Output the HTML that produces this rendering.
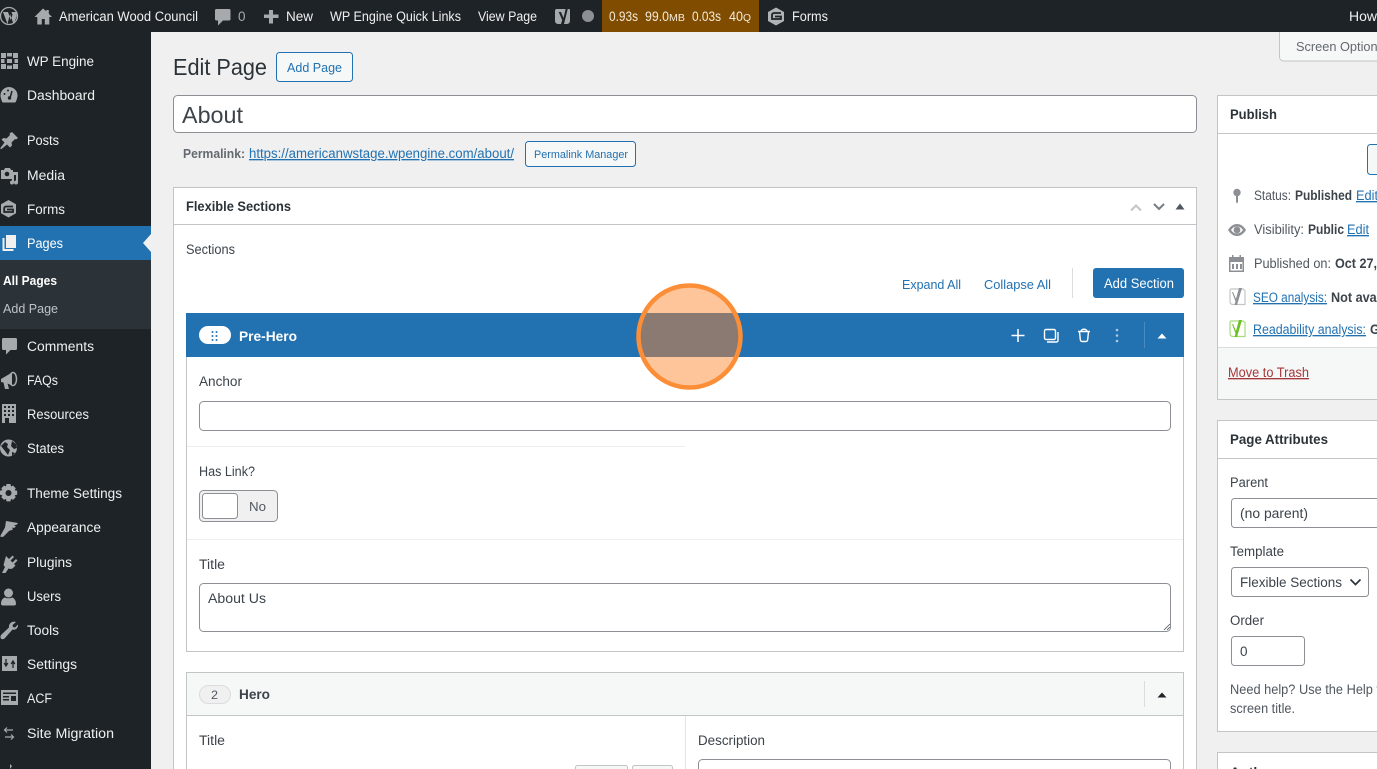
<!DOCTYPE html>
<html lang="en"><head><meta charset="utf-8"><title>Edit Page</title>
<style>
html,body{margin:0;padding:0;width:1377px;height:769px;overflow:hidden;background:#f0f0f1}
svg{display:block}
text{font-family:"Liberation Sans",Arial,sans-serif;font-size:13.5px;fill:#2c3338}
.b{fill:#f0f0f1}
.i{fill:#a7aaad}
.l{fill:#2271b1;text-decoration:underline}
.s{font-weight:bold;fill:#2c3338}
.g{fill:#50575e}
.y{fill:#f4ead8}
.sb{fill:#eef0f1}
</style></head><body>
<svg width="1377" height="769" viewBox="0 0 1377 769" xmlns="http://www.w3.org/2000/svg">
<rect width="1377" height="769" fill="#f0f0f1"/>
<!-- sidebar -->
<rect x="0" y="0" width="151" height="769" fill="#1d2327"/>
<rect x="0" y="226" width="151" height="34" fill="#2271b1"/>
<rect x="0" y="260" width="151" height="69" fill="#2c3338"/>
<path d="M151 234l-8 9 8 9z" fill="#f0f0f1"/>
<!-- screen options -->
<path d="M1279.500 30v27a4 4 0 0 0 4 4H1380V30z" fill="#f6f7f7" stroke="#c3c4c7"/>
<!-- admin bar -->
<rect width="1377" height="32" fill="#1d2327"/>
<rect x="602" width="157" height="32" fill="#7f4c00"/>
<!-- admin bar icons -->
<g fill="#a7aaad">
<circle cx="9" cy="16" r="8.500" fill="none" stroke="#a7aaad" stroke-width="1.300"/>
<path d="M3 12h5l2.700 8 1.800-5.200-1-2.800h4.500c1 1.500 1 3.500.3 5.500L13.500 24 10 14l-2.500 10z"/>
<path d="M43 8.500l-8.500 8.500h2.800v7.500h4.500v-5.500h3v5.500h4.500V17h2.700l-3.200-3.200V10h-2.500v1.300z"/>
<path d="M216.500 9h12.500a1.500 1.500 0 0 1 1.500 1.500v8.500a1.500 1.500 0 0 1-1.500 1.500h-6l-5 5v-5h-1.500a1.500 1.500 0 0 1-1.500-1.500v-8.500a1.500 1.500 0 0 1 1.500-1.500z"/>
<path d="M269 10h4v4.500h5.500v3.500H273v5.500h-4V18h-5v-3.500h5z"/>
<path d="M556 9h13a1 1 0 0 1 1 1v11a3 3 0 0 1-3 3h-9a3 3 0 0 1-3-3V11a2 2 0 0 1 1-2z"/>
<circle cx="588" cy="16" r="6" fill="#8c8f94"/>
<path d="M776 7.500l8 4.500v9l-8 4.500-8-4.500v-9z" fill="#b0b3b6"/>
<path d="M781 13h-7a2 2 0 0 0-2 2v4h9v-2.500h-6" fill="none" stroke="#1d2327" stroke-width="1.800"/>
</g>
<path d="M561 12l2.500 6 2.800-12h2.200l-4.500 18h-3l1.200-4-3.500-8z" fill="#1d2327"/>
<!-- sidebar icons -->
<g fill="#a7aaad">
<path d="M1 53h5v5H1zM7 53h5v3.500H7zM13 53h5v5h-5zM1 59h3.500v4H1zM14.500 59H18v4h-3.500zM1 64h5v5H1zM7 65.500h5V69H7zM13 64h5v5h-5z"/>
<rect x="7" y="59" width="5" height="4"/>
<path d="M9 87a8.500 8.500 0 0 0-8 11.500c.3.800 1 4 2 4h12c1 0 1.700-3.200 2-4A8.500 8.500 0 0 0 9 87z"/>
<path d="M12 91l-2 7" stroke="#1d2327" stroke-width="1.500"/><circle cx="9.500" cy="98" r="1.700" fill="#1d2327"/>
<circle cx="4.500" cy="94" r="1" fill="#1d2327"/><circle cx="8" cy="90.500" r="1" fill="#1d2327"/>
<!-- posts pin -->
<path d="M12 132l6 6-2 1.500-1-.5-3.500 3.500.5 3-2 2-3-3-5.500 4.500-1.500-.5 4.500-6-3-3 2-1.500 3 .5L10 135l-.5-1.500z"/>
<!-- media -->
<path d="M1 170h3l1-2h5l1 2h2v9H1z"/><circle cx="7" cy="174" r="2.300" fill="#1d2327"/>
<path d="M12 172h6v10.500a2 2 0 1 1-2-2v-5.500h-2v7.500a2 2 0 1 1-2-2z"/>
<!-- forms -->
<path d="M8.500 200l7.500 4.200v9.100l-7.500 4.200-7.500-4.200v-9.100z"/>
<path d="M13 206.500H6a1.800 1.800 0 0 0-1.800 1.800V212H13v-2.500H7" fill="none" stroke="#1d2327" stroke-width="1.800"/>
<!-- comments -->
<path d="M3.500 338h12a1.500 1.500 0 0 1 1.500 1.500v9a1.500 1.500 0 0 1-1.500 1.500H10.500l-4.500 4.500V350H3.500A1.500 1.500 0 0 1 2 348.500v-9A1.500 1.500 0 0 1 3.500 338z"/>
<!-- faqs -->
<path d="M1 379l11-6.500v13L7.500 383.500l1.500 5.500H5l-1.500-6.500-2.500-.5z"/><ellipse cx="13" cy="379" rx="3.500" ry="6.500" fill="none" stroke="#a7aaad" stroke-width="1.500"/>
<!-- resources -->
<path d="M2 404h14v19H2z"/>
<path d="M4 406h2v2H4zM8 406h2v2H8zM12 406h2v2h-2zM4 410h2v2H4zM8 410h2v2H8zM12 410h2v2h-2zM4 414h2v2H4zM8 414h2v2H8zM12 414h2v2h-2zM5 418h4v5H5z" fill="#1d2327"/>
<!-- states -->
<circle cx="8.500" cy="448" r="8.500"/>
<path d="M1 446l4-4 3 2-1 3 3 3-2 5-3-4zM12 441l4 3 1 4-3 1-3-3zM12 452l3 1-3 3z" fill="#1d2327"/>
<!-- theme settings -->
<path d="M6.500 484h4l.5 2.500 2-1 2.700 2.700-1 2 2.500.5v4l-2.500.5 1 2-2.700 2.700-2-1-.5 2.500h-4l-.5-2.500-2 1-2.700-2.700 1-2-2.500-.5v-4l2.500-.5-1-2 2.700-2.700 2 1z"/>
<circle cx="8.500" cy="493" r="3" fill="#1d2327"/>
<!-- appearance -->
<path d="M6 521l12 2-1 1.500-3 1 2 1-2 1.500-2-.5 1 2-4 1.500L3 537l-3-.5 5-9z"/>
<!-- plugins -->
<path d="M6 556l3 3 3.500-3.500 1.500 1.500-3.500 3.500 2 2 3.500-3.500 1.500 1.500-3.500 3.500 1.500 1.500-3 3-2 .5-2-.5-3 4.500H2l3-6-1.500-2z"/>
<!-- users -->
<circle cx="8.500" cy="593" r="4.500"/><path d="M1 604c0-4 2-6 4-6.500 2 1 5 1 7 0 2 .5 4 2.500 4 6.500 0 1-1 1.500-2 1.500H3c-1 0-2-.5-2-1.500z"/>
<!-- tools -->
<path d="M16 622l-3.500 3 .5 2 2 .5 3-3c.5 3-2 6-5.500 5L5 638c-1 1.500-4 2-4.500-.5-.3-1.500.5-2.500 1.500-3.500l7-6.500c-.7-3.500 3-7 7-5.500z"/>
<!-- settings -->
<rect x="2" y="656" width="15" height="15"/>
<path d="M6 659v6M4.200 663l1.800 3 1.800-3M13 668v-6M11.200 664l1.800-3 1.800 3" stroke="#1d2327" stroke-width="1.300" fill="none"/>
<!-- acf -->
<rect x="1" y="690" width="17" height="15"/>
<path d="M3 692.500h13v1.500H3zM3 696h6v1.500H3zM3 699h6v1.500H3zM11 696h5v5h-5z" fill="#1d2327"/>
</g>
<path d="M5 730h8M7 727.500L4.500 730 7 732.500M5 737h8M11 734.500l2.500 2.500-2.500 2.500" stroke="#a7aaad" stroke-width="1.200" fill="none"/>
<path d="M10 764l2 2-2 3z" fill="#a7aaad"/>
<!-- Pages icon active -->
<path d="M6 235h10v13H6zM2.500 238H4.500v11h9v2h-11z" fill="#f0f0f1"/>

<!-- admin bar text -->
<text class="b" x="59" y="21" textLength="139" lengthAdjust="spacingAndGlyphs">American Wood Council</text>
<text class="i" x="238" y="21" textLength="7.500" lengthAdjust="spacingAndGlyphs">0</text>
<text class="b" x="286" y="21" textLength="27" lengthAdjust="spacingAndGlyphs">New</text>
<text class="b" x="330" y="21" textLength="131" lengthAdjust="spacingAndGlyphs">WP Engine Quick Links</text>
<text class="b" x="478" y="21" textLength="59" lengthAdjust="spacingAndGlyphs">View Page</text>
<text class="y" x="609" y="21" textLength="29" lengthAdjust="spacingAndGlyphs">0.93s</text>
<text class="y" x="645" y="21" textLength="24" lengthAdjust="spacingAndGlyphs">99.0</text><text class="y" x="669" y="21" style="font-size:10px" textLength="16" lengthAdjust="spacingAndGlyphs">MB</text>
<text class="y" x="692" y="21" textLength="29" lengthAdjust="spacingAndGlyphs">0.03s</text>
<text class="y" x="729" y="21" textLength="14" lengthAdjust="spacingAndGlyphs">40</text><text class="y" x="743" y="21" style="font-size:10px" textLength="8" lengthAdjust="spacingAndGlyphs">Q</text>
<text class="b" x="792" y="21" textLength="36" lengthAdjust="spacingAndGlyphs">Forms</text>
<text class="b" x="1349" y="21" textLength="28" lengthAdjust="spacingAndGlyphs">How</text>

<!-- sidebar text -->
<text class="sb" x="27" y="66" textLength="67" lengthAdjust="spacingAndGlyphs">WP Engine</text>
<text class="sb" x="27" y="100" textLength="68" lengthAdjust="spacingAndGlyphs">Dashboard</text>
<text class="sb" x="27" y="145" textLength="32" lengthAdjust="spacingAndGlyphs">Posts</text>
<text class="sb" x="27" y="180" textLength="38" lengthAdjust="spacingAndGlyphs">Media</text>
<text class="sb" x="27" y="214" textLength="38" lengthAdjust="spacingAndGlyphs">Forms</text>
<text style="fill:#fff" x="27" y="248" textLength="36" lengthAdjust="spacingAndGlyphs">Pages</text>
<text style="fill:#fff;font-weight:bold;font-size:13px" x="3" y="285" textLength="54" lengthAdjust="spacingAndGlyphs">All Pages</text>
<text style="fill:#bfc3c7;font-size:13px" x="3" y="313" textLength="55" lengthAdjust="spacingAndGlyphs">Add Page</text>
<text class="sb" x="27" y="351" textLength="67" lengthAdjust="spacingAndGlyphs">Comments</text>
<text class="sb" x="27" y="385" textLength="31" lengthAdjust="spacingAndGlyphs">FAQs</text>
<text class="sb" x="27" y="419" textLength="62" lengthAdjust="spacingAndGlyphs">Resources</text>
<text class="sb" x="27" y="453" textLength="37" lengthAdjust="spacingAndGlyphs">States</text>
<text class="sb" x="27" y="498" textLength="95" lengthAdjust="spacingAndGlyphs">Theme Settings</text>
<text class="sb" x="27" y="532" textLength="74" lengthAdjust="spacingAndGlyphs">Appearance</text>
<text class="sb" x="27" y="567" textLength="45" lengthAdjust="spacingAndGlyphs">Plugins</text>
<text class="sb" x="27" y="601" textLength="34" lengthAdjust="spacingAndGlyphs">Users</text>
<text class="sb" x="27" y="635" textLength="32" lengthAdjust="spacingAndGlyphs">Tools</text>
<text class="sb" x="27" y="669" textLength="50" lengthAdjust="spacingAndGlyphs">Settings</text>
<text class="sb" x="27" y="703" textLength="25" lengthAdjust="spacingAndGlyphs">ACF</text>
<text class="sb" x="27" y="738" textLength="87" lengthAdjust="spacingAndGlyphs">Site Migration</text>

<!-- heading -->
<text x="173" y="75" style="font-size:23px;fill:#2c3338" textLength="94" lengthAdjust="spacingAndGlyphs">Edit Page</text>
<rect x="276.500" y="52.500" width="76" height="29" rx="3" fill="#f6f7f7" stroke="#2271b1"/>
<text x="287" y="72" style="fill:#2271b1;font-size:13px" textLength="55" lengthAdjust="spacingAndGlyphs">Add Page</text>
<rect x="173.500" y="95.500" width="1023" height="37" rx="4" fill="#fff" stroke="#8c8f94"/>
<text x="182" y="123" style="font-size:23px;fill:#3c434a" textLength="61" lengthAdjust="spacingAndGlyphs">About</text>
<text x="183" y="158" style="font-weight:bold;fill:#646970;font-size:13px" textLength="62" lengthAdjust="spacingAndGlyphs">Permalink:</text>
<text class="l" x="249" y="158" textLength="265" lengthAdjust="spacingAndGlyphs">https://americanwstage.wpengine.com/about/</text>
<rect x="525.500" y="141.500" width="110" height="25" rx="3" fill="#f6f7f7" stroke="#2271b1"/>
<text x="534" y="158" style="fill:#2271b1;font-size:11px" textLength="94" lengthAdjust="spacingAndGlyphs">Permalink Manager</text>

<!-- flexible sections -->
<rect x="173.500" y="187.500" width="1023" height="600" fill="#fff" stroke="#c3c4c7"/>
<path d="M174 224.500h1022" stroke="#c3c4c7"/>
<text class="s" x="186" y="211" textLength="105" lengthAdjust="spacingAndGlyphs">Flexible Sections</text>
<path d="M1131 210.500l5-5 5 5" fill="none" stroke="#c3c4c7" stroke-width="2"/>
<path d="M1154 204l5 5 5-5" fill="none" stroke="#787c82" stroke-width="2"/>
<path d="M1175.500 209.500l4.500-6 4.500 6z" fill="#50575e"/>
<text x="186" y="254" style="fill:#3c434a" textLength="49" lengthAdjust="spacingAndGlyphs">Sections</text>
<text x="902" y="289" style="fill:#2271b1;font-size:13px" textLength="59" lengthAdjust="spacingAndGlyphs">Expand All</text>
<text x="984" y="289" style="fill:#2271b1;font-size:13px" textLength="67" lengthAdjust="spacingAndGlyphs">Collapse All</text>
<path d="M1072.500 268v30" stroke="#dcdcde"/>
<rect x="1093" y="268" width="91" height="30" rx="3" fill="#2271b1"/>
<text x="1104" y="288" style="fill:#fff" textLength="70" lengthAdjust="spacingAndGlyphs">Add Section</text>

<!-- Pre-Hero layout -->
<rect x="186.500" y="313.500" width="997" height="338" fill="#fff" stroke="#c3c4c7"/>
<rect x="186" y="313" width="998" height="44" fill="#2271b1"/>
<rect x="199" y="326" width="32" height="18" rx="9" fill="#fff"/>
<g fill="#2271b1"><circle cx="212.500" cy="332" r="1"/><circle cx="216.500" cy="332" r="1"/><circle cx="212.500" cy="336" r="1"/><circle cx="216.500" cy="336" r="1"/><circle cx="212.500" cy="340" r="1"/><circle cx="216.500" cy="340" r="1"/></g>
<text x="239" y="341" style="fill:#fff;font-weight:bold" textLength="58" lengthAdjust="spacingAndGlyphs">Pre-Hero</text>
<path d="M1018 329v13M1011.500 335.500h13" stroke="#fff" stroke-width="1.500"/>
<rect x="1044.500" y="329.500" width="11" height="10" rx="1.500" fill="none" stroke="#fff" stroke-width="1.400"/>
<path d="M1058 332v8.500a1.500 1.500 0 0 1-1.500 1.500H1047" fill="none" stroke="#fff" stroke-width="1.400"/>
<path d="M1078 331.500h12M1081 331.500c0-3 6-3 6 0M1079.500 331.500l.8 8c.1 1.500 1 2 2 2h3.400c1 0 1.900-.5 2-2l.8-8" fill="none" stroke="#fff" stroke-width="1.400"/>
<g fill="#a9c9e4"><circle cx="1117" cy="330" r="1.300"/><circle cx="1117" cy="335.500" r="1.300"/><circle cx="1117" cy="341" r="1.300"/></g>
<path d="M1144.500 322v26" stroke="#4a8ac0"/>
<path d="M1157.500 338.500l4.500-5 4.500 5z" fill="#fff"/>

<text x="199" y="386" style="fill:#3c434a" textLength="43" lengthAdjust="spacingAndGlyphs">Anchor</text>
<rect x="199.500" y="401.500" width="971" height="29" rx="4" fill="#fff" stroke="#8c8f94"/>
<path d="M187 446.500h498" stroke="#eeeeee"/>
<text x="199" y="476" style="fill:#3c434a" textLength="56" lengthAdjust="spacingAndGlyphs">Has Link?</text>
<rect x="199.500" y="490.500" width="78" height="31" rx="4" fill="#f0f0f1" stroke="#8c8f94"/>
<rect x="202.500" y="493.500" width="35" height="25" rx="3" fill="#fff" stroke="#8c8f94"/>
<text x="249" y="511" style="fill:#50575e;font-size:13px" textLength="17" lengthAdjust="spacingAndGlyphs">No</text>
<path d="M187 539.500h996" stroke="#eeeeee"/>
<text x="199" y="569" style="fill:#3c434a" textLength="26" lengthAdjust="spacingAndGlyphs">Title</text>
<rect x="199.500" y="583.500" width="971" height="48" rx="4" fill="#fff" stroke="#8c8f94"/>
<text x="208" y="603" style="fill:#3c434a" textLength="58" lengthAdjust="spacingAndGlyphs">About Us</text>
<path d="M1164 630l6-6M1167 630l3-3" stroke="#50575e" stroke-width=".8"/>

<!-- Hero -->
<rect x="186.500" y="672.500" width="997" height="110" fill="#fff" stroke="#c3c4c7"/>
<rect x="187" y="673" width="996" height="42" fill="#f6f7f7"/>
<path d="M187 715.500h996" stroke="#c3c4c7"/>
<rect x="199.500" y="685.500" width="31" height="18" rx="9" fill="#f0f0f1" stroke="#dcdcde"/>
<text x="211" y="699" style="fill:#50575e;font-size:12px" textLength="7" lengthAdjust="spacingAndGlyphs">2</text>
<text x="239" y="699" style="font-weight:bold;fill:#3c434a" textLength="31" lengthAdjust="spacingAndGlyphs">Hero</text>
<path d="M1144.500 681v26" stroke="#dcdcde"/>
<path d="M1157.500 697.500l4.500-5 4.500 5z" fill="#1d2327"/>
<path d="M685.500 716v53" stroke="#e5e5e5"/>
<text x="199" y="745" style="fill:#3c434a" textLength="26" lengthAdjust="spacingAndGlyphs">Title</text>
<text x="698" y="745" style="fill:#3c434a" textLength="67" lengthAdjust="spacingAndGlyphs">Description</text>
<rect x="575.500" y="765.500" width="52" height="12" rx="2" fill="#f6f7f7" stroke="#c3c4c7"/>
<rect x="632.500" y="765.500" width="40" height="12" rx="2" fill="#f6f7f7" stroke="#c3c4c7"/>
<rect x="698.500" y="759.500" width="472" height="30" rx="4" fill="#fff" stroke="#8c8f94"/>

<text x="1296" y="51" style="fill:#646970;font-size:13px" textLength="88" lengthAdjust="spacingAndGlyphs">Screen Options</text>

<!-- publish -->
<rect x="1217.500" y="95.500" width="170" height="304" fill="#fff" stroke="#c3c4c7"/>
<path d="M1218 133.500h160" stroke="#c3c4c7"/>
<text class="s" x="1230" y="119" textLength="47" lengthAdjust="spacingAndGlyphs">Publish</text>
<rect x="1367.500" y="144.500" width="30" height="30" rx="3" fill="#f6f7f7" stroke="#2271b1"/>
<g fill="#8c8f94">
<circle cx="1237" cy="192.500" r="3.700"/><path d="M1236 195h2v7l-1 1.500-1-1.500z"/>
<path d="M1228 230c2.500-4 5.500-6 9-6s6.500 2 9 6c-2.500 4-5.500 6-9 6s-6.500-2-9-6zm3 0c1.600 2.300 3.500 3.500 6 3.500s4.400-1.200 6-3.500c-1.600-2.300-3.500-3.500-6-3.500s-4.400 1.200-6 3.500z"/><circle cx="1237" cy="230" r="3.400"/>
<path d="M1229 257h3v-2h1.500v2h6v-2h1.500v2h3v15h-15zm1.500 5v8.500h12V262z"/>
<path d="M1232 264h2v5h-2zM1236 264h2v5h-2zM1240 264h2v5h-2z"/>
</g>
<path d="M1231 289h12l2 1.500v14h-12c-2 0-3-1-3-3v-10c0-1.500.5-2.500 1-2.500z" fill="none" stroke="#c3c4c7" stroke-width="1.200"/>
<path d="M1233 292l3 7 3-11h3l-5 17h-2.500l1-3.500-3.500-9.500z" fill="#8c8f94"/>
<path d="M1231 321h12l2 1.500v14h-12c-2 0-3-1-3-3v-10c0-1.500.5-2.500 1-2.500z" fill="none" stroke="#a5dc7c" stroke-width="1.200"/>
<path d="M1233 324l3 7 3-11h3l-5 17h-2.500l1-3.500-3.500-9.500z" fill="#6cc024"/>
<text x="1254" y="200" style="fill:#50575e" textLength="37" lengthAdjust="spacingAndGlyphs">Status:</text>
<text class="s" style="fill:#3c434a" x="1295" y="200" textLength="57" lengthAdjust="spacingAndGlyphs">Published</text>
<text class="l" x="1356" y="200" textLength="22" lengthAdjust="spacingAndGlyphs">Edit</text>
<text x="1254" y="234" style="fill:#50575e" textLength="50" lengthAdjust="spacingAndGlyphs">Visibility:</text>
<text class="s" style="fill:#3c434a" x="1308" y="234" textLength="36" lengthAdjust="spacingAndGlyphs">Public</text>
<text class="l" x="1347" y="234" textLength="22" lengthAdjust="spacingAndGlyphs">Edit</text>
<text x="1254" y="268" style="fill:#50575e" textLength="77" lengthAdjust="spacingAndGlyphs">Published on:</text>
<text class="s" style="fill:#3c434a" x="1335" y="268" textLength="42" lengthAdjust="spacingAndGlyphs">Oct 27,</text>
<text class="l" x="1253" y="302" textLength="74" lengthAdjust="spacingAndGlyphs">SEO analysis:</text>
<text class="s" style="fill:#3c434a" x="1331" y="302" textLength="78" lengthAdjust="spacingAndGlyphs">Not available</text>
<text class="l" x="1253" y="334" textLength="113" lengthAdjust="spacingAndGlyphs">Readability analysis:</text>
<text class="s" style="fill:#3c434a" x="1370" y="334" textLength="33" lengthAdjust="spacingAndGlyphs">Good</text>
<rect x="1218" y="347" width="160" height="52" fill="#f6f7f7"/>
<path d="M1218 347.500h160" stroke="#dcdcde"/>
<text x="1228" y="377" style="fill:#a5383a;text-decoration:underline" textLength="81" lengthAdjust="spacingAndGlyphs">Move to Trash</text>

<!-- page attributes -->
<rect x="1217.500" y="420.500" width="170" height="311" fill="#fff" stroke="#c3c4c7"/>
<path d="M1218 458.500h160" stroke="#c3c4c7"/>
<text class="s" x="1230" y="444" textLength="98" lengthAdjust="spacingAndGlyphs">Page Attributes</text>
<text x="1230" y="487" style="fill:#3c434a" textLength="38" lengthAdjust="spacingAndGlyphs">Parent</text>
<rect x="1231.500" y="498.500" width="170" height="29" rx="3" fill="#fff" stroke="#8c8f94"/>
<text x="1240" y="518" style="fill:#3c434a" textLength="68" lengthAdjust="spacingAndGlyphs">(no parent)</text>
<text x="1230" y="556" style="fill:#3c434a" textLength="54" lengthAdjust="spacingAndGlyphs">Template</text>
<rect x="1231.500" y="567.500" width="137" height="29" rx="3" fill="#fff" stroke="#8c8f94"/>
<text x="1240" y="587" style="fill:#3c434a" textLength="102" lengthAdjust="spacingAndGlyphs">Flexible Sections</text>
<path d="M1350.500 579.500l5 5 5-5" fill="none" stroke="#2c3338" stroke-width="1.700"/>
<text x="1230" y="625" style="fill:#3c434a" textLength="34" lengthAdjust="spacingAndGlyphs">Order</text>
<rect x="1231.500" y="636.500" width="73" height="29" rx="3" fill="#fff" stroke="#8c8f94"/>
<text x="1240" y="656" style="fill:#3c434a" textLength="7.500" lengthAdjust="spacingAndGlyphs">0</text>
<text x="1230" y="694" style="fill:#50575e" textLength="150" lengthAdjust="spacingAndGlyphs">Need help? Use the Help t</text>
<text x="1230" y="713" style="fill:#50575e" textLength="65" lengthAdjust="spacingAndGlyphs">screen title.</text>

<!-- author -->
<rect x="1217.500" y="752.500" width="170" height="40" fill="#fff" stroke="#c3c4c7"/>
<text class="s" x="1230" y="777" textLength="46" lengthAdjust="spacingAndGlyphs">Author</text>

<!-- highlight circle -->
<circle cx="689.500" cy="336.500" r="51" fill="rgb(255,133,42)" fill-opacity=".475" stroke="#fb8e36" stroke-width="4.500"/>
</svg>
</body></html>
